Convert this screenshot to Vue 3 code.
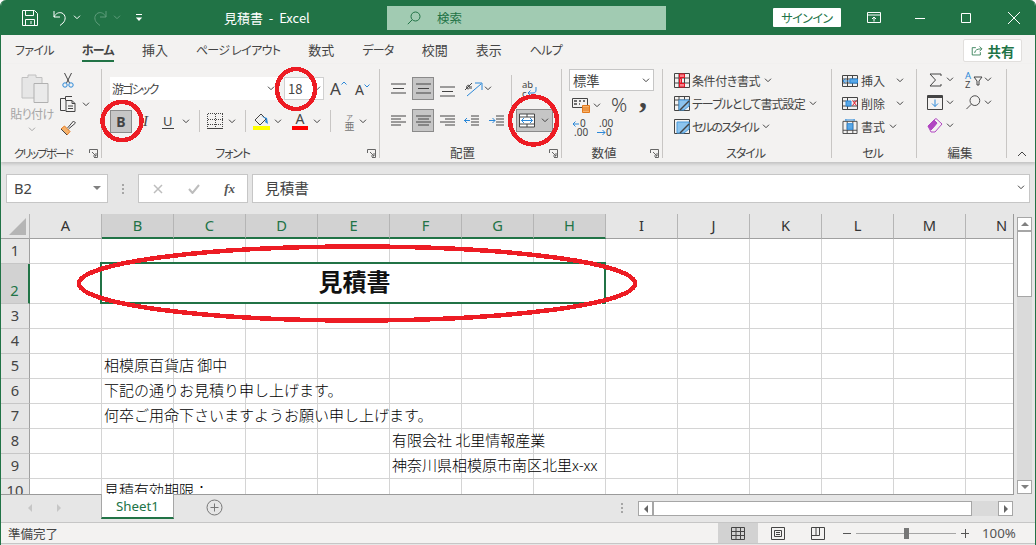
<template>
  <div class="window">
    <svg class="sprite" aria-hidden="true">
      <symbol id="chev" viewBox="0 0 8 5"><path d="M1 .7l3 3 3-3" /></symbol>
      <symbol id="launch" viewBox="0 0 9 9"><path d="M.5 4V.5h8v8H5M3 3l4 4M7 4v3H4" /></symbol>
    </svg>

    <header class="titlebar">
      <svg class="qat save" viewBox="0 0 16 16"><path d="M.5.500h12l3 3v12H.5zM3.500.5v5h8v-5M3.500 15.500v-6h9v6M9 11v3" /></svg>
      <svg class="qat undo" viewBox="0 0 16 16"><path d="M2 1v6h6M2 7c2-4 5-5 8-4 4 2 4 7 1 10l-3 2.500" /></svg>
      <svg class="tchev c-undo"><use href="#chev" /></svg>
      <svg class="qat redo dim" viewBox="0 0 16 16"><path d="M14 1v6H8M14 7c-2-4-5-5-8-4-4 2-4 7-1 10l3 2.500" /></svg>
      <svg class="tchev c-redo dim"><use href="#chev" /></svg>
      <svg class="customize" viewBox="0 0 8 8"><path d="M1 .5h6" /><path class="solid" d="M.8 3.500h6.400L4 7z" /></svg>
      <div class="doc-title">見積書&nbsp; - &nbsp;Excel</div>
      <div class="search">
        <svg viewBox="0 0 14 14"><circle cx="8.500" cy="5.500" r="4.500" /><path d="M5.200 8.800L.8 13.200" /></svg>
        <span>検索</span>
      </div>
      <button class="signin">サインイン</button>
      <svg class="display" viewBox="0 0 14 11"><path d="M.5.500h13v10H.5zM.5 3h13M7 9.500V5M5 7l2-2 2 2" /></svg>
      <svg class="win min" viewBox="0 0 10 10"><path d="M0 5.500h10" /></svg>
      <svg class="win max" viewBox="0 0 10 10"><path d="M.5.500h9v9h-9z" /></svg>
      <svg class="win close" viewBox="0 0 14 14"><path d="M1 1l12 12M13 1L1 13" /></svg>
    </header>

    <nav class="tabs">
      <span v-for="t in tabs" :key="t.name" class="tab" :class="{ active: t.active, kana: t.kana }">{{ t.name }}</span>
      <button class="share">
        <svg viewBox="0 0 16 16"><path d="M6 4.500H1.500v9h10V10M4.500 11C5 7 8 6 13 6M10.500 3l3 3-3 3" /></svg>
        共有
      </button>
    </nav>

    <section class="ribbon">
      <!-- クリップボード -->
      <div class="group g-clip">
        <div class="body clip-body">
          <div class="paste">
            <svg viewBox="0 0 28 30"><path class="g1" d="M1 4.500h6V2h8v2.500h6V25H1z" /><path class="g2" d="M13 10.500h14v19H13z" /></svg>
            <span>貼り付け</span>
            <svg class="chev light"><use href="#chev" /></svg>
          </div>
          <div class="clip-tools">
            <svg class="ico cut" viewBox="0 0 12 16"><path d="M2.500 1l5 10M9.500 1l-5 10" /><circle class="bl" cx="3" cy="13" r="2.200" /><circle class="bl" cx="9" cy="13" r="2.200" /></svg>
            <div class="copy-row">
              <svg class="ico copy" viewBox="0 0 17 16"><path d="M5.500 2.500h-5v12h5M5.500 4.500V.5M5.500.5H12M6 4.500h6l3 3v8H6zM12 4.500v3h3M8 10h5M8 12.500h5" /></svg>
              <svg class="chev"><use href="#chev" /></svg>
            </div>
            <svg class="ico brush" viewBox="0 0 16 16"><path class="or" d="M1 9l6 6 3-3.500-5.500-5.500z" /><path d="M1 9l6 6M7.500 8l6-7 2 2-7 6" /></svg>
          </div>
        </div>
        <div class="label"><span class="kana-tight">クリップボード</span><svg class="launch"><use href="#launch" /></svg></div>
      </div>

      <!-- フォント -->
      <div class="group g-font">
        <div class="body font-body">
          <div class="font-row1">
            <div class="select font-name"><span>游ゴシック</span><svg class="chev"><use href="#chev" /></svg></div>
            <div class="select font-size"><span>18</span><svg class="chev"><use href="#chev" /></svg></div>
            <span class="grow">A<svg viewBox="0 0 6 4"><path d="M.5 3.500L3 1l2.500 2.500" /></svg></span>
            <span class="shrink">A<svg viewBox="0 0 6 4"><path d="M.5.500L3 3 5.500.500" /></svg></span>
          </div>
          <div class="font-row2">
            <button class="toggle bold">B</button>
            <span class="italic">I</span>
            <span class="under">U</span>
            <svg class="chev"><use href="#chev" /></svg>
            <i class="vsep"></i>
            <svg class="ico borders" viewBox="0 0 16 16"><path class="dots" d="M.5.500h15M.5 6.500h15M.5 11.500h15M.5.500v13M8 .5v13M15.500.5v13" /><path d="M0 15h16" /></svg>
            <svg class="chev"><use href="#chev" /></svg>
            <i class="vsep"></i>
            <svg class="ico fill-color" viewBox="0 0 17 18"><path d="M2 8l6-6 5 5-6 6z" /><path class="bl-fill" d="M8 4l5 3-1 3 3 2-1-6z" /><path class="yellow" d="M0 14h17v4H0z" /></svg>
            <svg class="chev"><use href="#chev" /></svg>
            <span class="font-color">A</span>
            <svg class="chev"><use href="#chev" /></svg>
            <i class="vsep"></i>
            <span class="phonetic"><small>ア</small>亜</span>
            <svg class="chev"><use href="#chev" /></svg>
          </div>
        </div>
        <div class="label"><span class="kana">フォント</span><svg class="launch"><use href="#launch" /></svg></div>
      </div>

      <!-- 配置 -->
      <div class="group g-align">
        <div class="body align-body">
          <div class="align-left">
            <div class="align-row1">
              <svg class="ico lines" viewBox="0 0 15 12"><path d="M0 1h15M2 5.500h11M0 10h15" /></svg>
              <button class="toggle"><svg class="ico lines" viewBox="0 0 15 12"><path d="M0 1h15M2 5.500h11M0 10h15" /></svg></button>
              <svg class="ico lines low" viewBox="0 0 15 12"><path d="M0 1h15M2 5.500h11M0 10h15" /></svg>
              <svg class="ico orient" viewBox="0 0 19 17"><path class="dk" d="M1 10l7-7M3 6c-1 1 0 3 1 3s2-1 1-3-1-1-2 0zM7 9V6" /><path class="bl" d="M3 16L17 4M11 3h7v7" /></svg>
              <svg class="chev"><use href="#chev" /></svg>
            </div>
            <div class="align-row2">
              <svg class="ico lines" viewBox="0 0 15 12"><path d="M0 1h15M0 4h10M0 7h15M0 10h10" /></svg>
              <button class="toggle"><svg class="ico lines" viewBox="0 0 15 12"><path d="M0 1h15M2 4h11M0 7h15M2 10h11" /></svg></button>
              <svg class="ico lines" viewBox="0 0 15 12"><path d="M0 1h15M5 4h10M0 7h15M5 10h10" /></svg>
              <svg class="ico lines" viewBox="0 0 15 12"><path d="M7 1h8M7 4h8M7 7h8M7 10h8" /><path class="bl" d="M0 5.500h6M3 3L.5 5.500 3 8" /></svg>
              <svg class="ico lines" viewBox="0 0 15 12"><path d="M7 1h8M7 4h8M7 7h8M7 10h8" /><path class="bl" d="M0 5.500h6M3.500 3L6 5.500 3.500 8" /></svg>
            </div>
          </div>
          <div class="align-right">
            <svg class="wrap" viewBox="0 0 17 18">
              <text x="1" y="8">ab</text><text x="1" y="17">c</text>
              <path class="bl" d="M15 7v3c0 2-1 3-3 3H7M9.500 10.500L7 13l2.500 2.500" />
            </svg>
            <button class="toggle merge">
              <svg class="ico" viewBox="0 0 16 14"><path class="white-box" d="M.5.500h15v13H.5z" /><path d="M.5 3.500h15M.5 10.500h15M8 .5v3M8 10.500v3" /><path class="bl" d="M2.500 7h11M5 4.500L2.500 7 5 9.500M11 4.500L13.500 7 11 9.500" /></svg>
              <svg class="chev"><use href="#chev" /></svg>
            </button>
          </div>
        </div>
        <div class="label"><span>配置</span><svg class="launch"><use href="#launch" /></svg></div>
      </div>

      <!-- 数値 -->
      <div class="group g-num">
        <div class="body num-body">
          <div class="select num-select"><span>標準</span><svg class="chev"><use href="#chev" /></svg></div>
          <div class="num-row2">
            <svg class="ico acct" viewBox="0 0 18 16"><path d="M.5 1.500h15v9H.5z" /><path class="thick" d="M2 4h3M2 7h3M7 4h2M7 7h1M11 4h2" /><path class="or" d="M10.500 8.500h7v7h-7z" /><path class="or-line" d="M10.500 11h7M10.500 13h7" /></svg>
            <svg class="chev"><use href="#chev" /></svg>
            <span class="percent">%</span>
            <span class="comma">,</span>
          </div>
          <div class="num-row3">
            <svg class="dec" viewBox="0 0 17 18"><text x="8" y="8">0</text><text x="2" y="17">.00</text><path class="bl" d="M1 5h6M3.500 2.500L1 5l2.500 2.500" /></svg>
            <svg class="dec" viewBox="0 0 17 18"><text x="3" y="8">.00</text><text x="10" y="17">0</text><path class="bl" d="M1 13.500h8M6.500 11L9 13.500 6.500 16" /></svg>
          </div>
        </div>
        <div class="label"><span>数値</span><svg class="launch"><use href="#launch" /></svg></div>
      </div>

      <!-- スタイル -->
      <div class="group g-style">
        <div class="body style-body">
          <div class="line-btn">
            <svg class="ico" viewBox="0 0 16 15"><path d="M.5.500h15v14H.5zM.5 5h15M.5 10h15M5 .5v14M10.500.5v14" /><path class="rd" d="M5.500 1h5v3.500h-5zM5.500 10.500h5V14h-5zM5.500 5.500h2V10h-2z" /></svg>
            <span class="t-cond">条件付き書式</span><svg class="chev"><use href="#chev" /></svg>
          </div>
          <div class="line-btn">
            <svg class="ico" viewBox="0 0 16 15"><path d="M.5.500h15v14H.5zM.5 4h15M.5 9h5M5 .5v14M10.500.5V4" /><path class="bl-pale" d="M5 4h10v6l-5 4H5z" /><path class="brush-line" d="M6 14l9-9" /></svg>
            <span class="t-table">テーブルとして書式設定</span><svg class="chev"><use href="#chev" /></svg>
          </div>
          <div class="line-btn">
            <svg class="ico" viewBox="0 0 16 15"><path d="M.5.500h15v14H.5z" /><path class="bl-pale" d="M3 3h12v7l-5 4H3z" /><path class="brush-line" d="M6 14l9-9" /></svg>
            <span class="t-cell">セルのスタイル</span><svg class="chev"><use href="#chev" /></svg>
          </div>
        </div>
        <div class="label plain"><span class="kana">スタイル</span></div>
      </div>

      <!-- セル -->
      <div class="group g-cell">
        <div class="body cell-body">
          <div class="line-btn">
            <svg class="ico" viewBox="0 0 16 15"><path d="M.5 2.500h15v11H.5zM.5 6h15M.5 10h15M5.500 2.500v11M10.500 2.500v11" /><path class="bl-soft" d="M8 6h7.500v4H8z" /><path class="bl" d="M1 8h7M3.500 5.500L1 8l2.500 2.500" /></svg>
            <span>挿入</span><svg class="chev"><use href="#chev" /></svg>
          </div>
          <div class="line-btn">
            <svg class="ico" viewBox="0 0 16 15"><path d="M.5 1.500h15v12H.5zM.5 5h4M11.500 5h4M.5 10h15M5.500 1.500v12" /><path class="bl-soft" d="M4 5h5v5H4z" /><path class="rd-line" d="M10.500 4.500l4 5M14.500 4.500l-4 5" /></svg>
            <span>削除</span><svg class="chev"><use href="#chev" /></svg>
          </div>
          <div class="line-btn narrow">
            <svg class="ico" viewBox="0 0 16 16"><path d="M.5 2.500h15v13H.5zM.5 12h15M5 2.500v13M11 2.500v13" /><path class="bl-soft" d="M5 5h6v6H5z" /><path class="bl" d="M3.500 1h9M3.500 0v2M12.500 0v2" /></svg>
            <span>書式</span><svg class="chev"><use href="#chev" /></svg>
          </div>
        </div>
        <div class="label plain"><span class="kana">セル</span></div>
      </div>

      <!-- 編集 -->
      <div class="group g-edit">
        <div class="body edit-body">
          <div class="edit-row first">
            <svg class="ico sigma" viewBox="0 0 13 14"><path d="M12 3V1H1l5.500 6L1 13h11v-2" /></svg>
            <svg class="chev"><use href="#chev" /></svg>
            <svg class="ico sort" viewBox="0 0 19 16"><text class="az-a" x="0" y="7">A</text><text class="az-z" x="0" y="16">Z</text><path d="M9 5h8l-3 4v4h-2V9z" /></svg>
            <svg class="chev"><use href="#chev" /></svg>
          </div>
          <div class="edit-row">
            <svg class="ico" viewBox="0 0 16 15"><path d="M.5.500h15v14H.5z" /><path class="thick-dk" d="M.5 2h15" /><path class="bl" d="M8 4.500v7M5 8.500l3 3 3-3" /></svg>
            <svg class="chev"><use href="#chev" /></svg>
            <svg class="ico" viewBox="0 0 16 16"><circle cx="10" cy="6" r="5.200" /><path d="M6.200 9.800L1 15" /></svg>
            <svg class="chev"><use href="#chev" /></svg>
          </div>
          <div class="edit-row">
            <svg class="ico" viewBox="0 0 16 15"><path class="pu" d="M1 8l6-6 3 3-6 7z" /><path class="pu-line" d="M7 2l2-1.500 6 5.500-7 8H4L1 8zM10 5l-6 7" /></svg>
            <svg class="chev"><use href="#chev" /></svg>
          </div>
        </div>
        <div class="label plain"><span>編集</span></div>
      </div>

      <svg class="collapse" viewBox="0 0 10 6"><path d="M1 5l4-4 4 4" /></svg>
    </section>

    <section class="formula">
      <div class="name-box"><span>B2</span><i class="tri-down"></i></div>
      <div class="grip"><i></i><i></i><i></i></div>
      <div class="fx-box">
        <svg viewBox="0 0 10 10"><path d="M1 1l8 8M9 1L1 9" /></svg>
        <svg viewBox="0 0 12 10"><path d="M1 5l3.500 4L11 1" /></svg>
        <span>fx</span>
      </div>
      <div class="fx-input"><span>見積書</span><svg class="chev"><use href="#chev" /></svg></div>
    </section>

    <section class="sheet-row">
      <div class="sheet">
        <div class="grid">
          <div class="corner"><i></i></div>
          <div v-for="c in cols" :key="c" class="col-head" :class="{ sel: selCols.includes(c) }">{{ c }}</div>
          <template v-for="r in rows" :key="r">
            <div class="row-head" :class="{ sel: r === 2 }">{{ r }}</div>
            <template v-if="r === 2">
              <div class="cell"></div>
              <div class="cell merged">
                見積書
                <i class="selection"><b></b></i>
              </div>
              <div v-for="c in cols.slice(8)" :key="c" class="cell"></div>
            </template>
            <template v-else>
              <div v-for="c in cols" :key="c" class="cell"><span v-if="cells[c + r]">{{ cells[c + r] }}</span></div>
            </template>
          </template>
        </div>
      </div>
      <div class="vscroll">
        <div class="sbtn"><i class="tri-up"></i></div>
        <div class="vthumb"></div>
        <div class="strack"></div>
        <div class="sbtn"><i class="tri-down"></i></div>
      </div>
    </section>

    <section class="sheet-tabs">
      <div class="nav-arrows"><i class="tri-left"></i><i class="tri-right"></i></div>
      <div class="sheet-tab">Sheet1</div>
      <svg class="add" viewBox="0 0 17 17"><circle cx="8.500" cy="8.500" r="7.500" /><path d="M8.500 4.500v8M4.500 8.500h8" /></svg>
      <div class="grip tab-grip"><i></i><i></i><i></i></div>
      <div class="hscroll">
        <div class="hbtn"><i class="tri-left dark"></i></div>
        <div class="hthumb"></div>
        <div class="strack"></div>
        <div class="hbtn"><i class="tri-right dark"></i></div>
      </div>
    </section>

    <footer class="status">
      <span class="ready">準備完了</span>
      <div class="view on"><svg viewBox="0 0 14 13"><path d="M.5.500h13v12H.5zM.5 4.500h13M.5 8.500h13M5 .5v12M9.500.5v12" /></svg></div>
      <div class="view"><svg viewBox="0 0 14 13"><path d="M.5.500h13v12H.5zM3.500 3.500h7v6h-7zM5 5.500h4M5 7.500h4" /></svg></div>
      <div class="view"><svg viewBox="0 0 14 13"><path d="M.5.500h13v12H.5zM.5 8.500h8V.5M5 .5v8" /></svg></div>
      <div class="zoom">
        <i class="zm"></i>
        <div class="slider"><b></b></div>
        <i class="zm plus"></i>
        <span>100%</span>
      </div>
    </footer>

    <svg class="marks" viewBox="0 0 1036 545" shape-rendering="crispEdges">
      <ellipse cx="122" cy="121" rx="19.500" ry="19" />
      <ellipse cx="296" cy="89" rx="19" ry="20" />
      <ellipse cx="533.500" cy="120.500" rx="23.500" ry="24" />
      <ellipse cx="357" cy="283.500" rx="278" ry="37" />
    </svg>
  </div>
</template>

<script setup>
const tabs = [
  { name: 'ファイル', kana: true },
  { name: 'ホーム', active: true, kana: true },
  { name: '挿入' },
  { name: 'ページ レイアウト', kana: true },
  { name: '数式' },
  { name: 'データ', kana: true },
  { name: '校閲' },
  { name: '表示' },
  { name: 'ヘルプ', kana: true }
]

const cols = ['A', 'B', 'C', 'D', 'E', 'F', 'G', 'H', 'I', 'J', 'K', 'L', 'M', 'N']
const selCols = ['B', 'C', 'D', 'E', 'F', 'G', 'H']
const rows = [1, 2, 3, 4, 5, 6, 7, 8, 9, 10]

const cells = {
  B5: '相模原百貨店 御中',
  B6: '下記の通りお見積り申し上げます。',
  B7: '何卒ご用命下さいますようお願い申し上げます。',
  F8: '有限会社 北里情報産業',
  F9: '神奈川県相模原市南区北里x-xx',
  B10: '見積有効期限：'
}
</script>

<style>
html,
body {
  margin: 0;
  background: #fff;
}
</style>

<style scoped>
.window {
  position: relative;
  width: 1036px;
  height: 545px;
  box-sizing: border-box;
  border-left: 1px solid #217346;
  border-right: 1px solid #217346;
  border-radius: 6px 6px 0 0;
  overflow: hidden;
  background: #e6e6e6;
  color: #444;
  font-family: "Noto Sans CJK JP", "Noto Sans", sans-serif;
  font-size: 13px;
  font-feature-settings: "palt";
}

button {
  font-family: inherit;
  padding: 0;
}

svg {
  display: block;
  fill: none;
  stroke: #444;
  stroke-width: 1;
  flex: none;
}

.sprite {
  position: absolute;
  width: 0;
  height: 0;
}

.chev {
  width: 8px;
  height: 5px;
}

.chev.light {
  stroke: #a6a6a6;
}

.ico {
  width: 16px;
  height: 15px;
}

/* title bar */
.titlebar {
  height: 35px;
  margin: 0 -1px;
  background: #217346;
  display: flex;
  align-items: center;
  color: #fff;
}

.titlebar svg {
  stroke: #fff;
}

.titlebar svg.dim {
  stroke: #5f9c7b;
}

.qat {
  width: 16px;
  height: 16px;
}

.save {
  margin-left: 22px;
}

.undo {
  margin-left: 14px;
}

.tchev {
  width: 8px;
  height: 5px;
  margin-left: 5px;
}

.redo {
  margin-left: 11px;
}

.customize {
  width: 8px;
  height: 8px;
  margin-left: 14px;
}

.customize .solid {
  fill: #fff;
  stroke: none;
}

.doc-title {
  margin-left: 81px;
  width: 87px;
  font-size: 13px;
  white-space: nowrap;
}

.search {
  margin-left: 76px;
  width: 279px;
  height: 24px;
  background: #a1cbb2;
  display: flex;
  align-items: center;
  color: #217346;
}

.titlebar .search svg {
  width: 14px;
  height: 14px;
  margin-left: 20px;
  stroke: #217346;
}

.search span {
  margin-left: 16px;
  font-size: 12.500px;
}

.signin {
  margin-left: 107px;
  width: 68px;
  height: 19px;
  background: #fff;
  border: 0;
  border-radius: 1px;
  color: #217346;
  font-size: 12px;
  letter-spacing: -.5px;
  font-feature-settings: "palt";
}

.display {
  width: 14px;
  height: 11px;
  margin-left: 26px;
}

.win {
  width: 10px;
  height: 10px;
}

.min {
  margin-left: 34px;
}

.max {
  margin-left: 36px;
}

.close {
  width: 14px;
  height: 14px;
  margin-left: 36px;
}

/* tabs */
.tabs {
  height: 29px;
  background: #f3f2f1;
  display: flex;
  align-items: flex-start;
  position: relative;
}

.tab {
  position: relative;
  height: 25px;
  line-height: 30px;
  margin-left: 28px;
  white-space: nowrap;
  font-size: 13px;
}

.tab.kana {
  font-size: 12px;
  letter-spacing: -.7px;
}

.tab:first-child {
  margin-left: 14px;
}

.tab.active {
  font-weight: 700;
  border-bottom: 2px solid #217346;
}

.share {
  margin: 4px 13px 0 auto;
  width: 59px;
  height: 23px;
  background: #fff;
  border: 1px solid #e1dfdd;
  border-radius: 2px;
  color: #217346;
  font-size: 13.500px;
  font-weight: 700;
  display: flex;
  align-items: center;
  justify-content: center;
  gap: 4px;
}

.share svg {
  width: 13px;
  height: 13px;
  stroke: #217346;
}

/* ribbon */
.ribbon {
  position: relative;
  z-index: 2;
  height: 98px;
  box-sizing: border-box;
  padding-top: 5px;
  background: #f3f2f1;
  box-shadow: 0 2px 3px rgba(0, 0, 0, .16);
  display: flex;
  align-items: flex-start;
}

.group {
  height: 89px;
  box-sizing: border-box;
  border-right: 1px solid #c8c6c4;
  display: flex;
  flex-direction: column;
}

.g-clip {
  width: 101px;
}

.g-font {
  width: 278px;
}

.g-align {
  width: 182px;
}

.g-num {
  width: 101px;
}

.g-style {
  width: 169px;
}

.g-cell {
  width: 85px;
}

.g-edit {
  width: 90px;
}

.body {
  flex: 1;
  min-height: 0;
}

.label {
  height: 16px;
  margin-bottom: -3px;
  padding-right: 3px;
  display: flex;
  align-items: center;
  font-size: 12.500px;
  line-height: 16px;
  white-space: nowrap;
}

.label span {
  flex: 1;
  text-align: center;
  padding-right: 4px;
}

.label.plain span {
  padding: 0;
}

.label .kana {
  font-size: 12px;
  letter-spacing: -1.100px;
}

.label .kana-tight {
  font-size: 11.500px;
  letter-spacing: -1.800px;
}

.launch {
  width: 9px;
  height: 9px;
  stroke: #666;
}

.toggle {
  background: #c6c6c6;
  border: 1px solid #8a8a8a;
  box-sizing: border-box;
  display: flex;
  align-items: center;
  justify-content: center;
}

.vsep {
  display: block;
  width: 1px;
  height: 22px;
  background: #c8c6c4;
}

.select {
  background: #fff;
  box-sizing: border-box;
  display: flex;
  align-items: center;
}

/* clipboard */
.clip-body {
  display: flex;
}

.paste {
  width: 56px;
  display: flex;
  flex-direction: column;
  align-items: center;
  padding-top: 4px;
  margin-left: 3px;
  color: #a6a6a6;
  font-size: 12px;
  letter-spacing: -.5px;
}

.paste svg:first-child {
  width: 28px;
  height: 30px;
  margin-left: 5px;
}

.paste span {
  line-height: 20px;
  margin-top: 1px;
  white-space: nowrap;
}

.paste .chev {
  margin-top: 3px;
}

.g1 {
  fill: #e6e6e6;
  stroke: #c0c0c0;
}

.g2 {
  fill: #eaeaea;
  stroke: #b0b0b0;
}

.clip-tools {
  margin-top: 3px;
  display: flex;
  flex-direction: column;
  gap: 8px;
}

.cut {
  width: 12px;
  height: 16px;
  margin-left: 2px;
}

.bl {
  stroke: #2b88d8;
}

.copy-row {
  display: flex;
  align-items: center;
  gap: 5px;
}

.copy {
  width: 17px;
  height: 16px;
}

.brush {
  height: 16px;
}

.or {
  fill: #f6b26b;
  stroke: #e3791c;
}

/* font */
.font-body {
  padding: 8px 0 0 8px;
}

.font-row1 {
  display: flex;
  align-items: center;
  height: 23px;
}

.font-name {
  width: 168px;
  height: 23px;
  padding: 0 2px;
  font-size: 12px;
  letter-spacing: -1.800px;
  justify-content: space-between;
}

.font-name .chev {
  margin-right: 1px;
}

.font-size {
  width: 40px;
  height: 23px;
  margin-left: 6px;
  border: 1px solid #d0d0d0;
  padding-left: 3px;
  justify-content: space-between;
  padding-right: 2px;
  font-size: 13px;
}

.grow,
.shrink {
  position: relative;
  color: #444;
  display: flex;
  font-family: "Noto Sans", sans-serif;
}

.grow {
  margin-left: 6px;
  width: 25px;
  font-size: 17px;
}

.shrink {
  width: 18px;
  font-size: 14px;
  padding-top: 2px;
}

.grow svg,
.shrink svg {
  width: 6px;
  height: 4px;
  margin-top: 4px;
  stroke: #2b88d8;
}

.font-row2 {
  margin-top: 9px;
  height: 24px;
  display: grid;
  grid-template-columns: 27px 25px 20px 17px 8px 21px 17px 8px 21px 18px 21px 17px 13px 16px auto;
  align-items: center;
  justify-items: start;
}

.bold {
  width: 22px;
  height: 23px;
  font-family: "Noto Sans", sans-serif;
  font-weight: 700;
  font-size: 14px;
  color: #444;
}

.italic {
  font-family: "Liberation Serif", serif;
  font-style: italic;
  font-size: 15px;
  padding-left: 6px;
}

.under {
  font-family: "Noto Sans", sans-serif;
  font-size: 13px;
  border-bottom: 1px solid #444;
  line-height: 14px;
  padding: 0 1px;
}

.borders {
  width: 16px;
  height: 16px;
  shape-rendering: crispEdges;
}

.dots {
  stroke-dasharray: 1 1;
}

.fill-color {
  width: 17px;
  height: 18px;
}

.bl-fill {
  fill: #2b88d8;
  stroke: none;
}

.yellow {
  fill: #ffff00;
  stroke: none;
}

.font-color {
  width: 16px;
  text-align: center;
  font-family: "Noto Sans", sans-serif;
  font-size: 14px;
  line-height: 14px;
  border-bottom: 4px solid #ff0000;
}

.phonetic {
  display: flex;
  flex-direction: column;
  align-items: center;
  width: 13px;
  font-size: 10px;
  line-height: 9px;
  color: #777;
}

.phonetic small {
  font-size: 7px;
  line-height: 8px;
}

/* alignment */
.align-body {
  padding-left: 11px;
  display: flex;
}

.align-left {
  width: 120px;
  height: 58px;
  margin-top: 6px;
  padding-top: 2px;
  border-right: 1px solid #c8c6c4;
}

.lines {
  width: 15px;
  height: 12px;
}

.low {
  margin-top: 6px;
}

.align-row1,
.align-row2 {
  display: grid;
  align-items: center;
  justify-items: start;
  height: 23px;
}

.align-row1 {
  grid-template-columns: 21px 28px 24px 20px auto;
}

.align-row2 {
  grid-template-columns: 21px 28px 24px 25px auto;
  margin-top: 9px;
}

.align-left .toggle {
  width: 22px;
  height: 23px;
}

.orient {
  width: 19px;
  height: 17px;
}

.dk {
  stroke: #444;
}

.align-right {
  margin-left: 4px;
  padding-top: 11px;
}

.wrap {
  width: 17px;
  height: 18px;
  margin-left: 5px;
  overflow: visible;
}

.wrap text,
.dec text,
.sort text {
  stroke: none;
  fill: #444;
  font-family: "Noto Sans", sans-serif;
  font-size: 9.500px;
}

.merge {
  width: 37px;
  height: 23px;
  margin-top: 11px;
  gap: 6px;
  justify-content: flex-start;
  padding-left: 2px;
}

.white-box {
  fill: #fff;
}

/* number */
.num-body {
  padding-left: 7px;
}

.num-select {
  width: 85px;
  height: 22px;
  border: 1px solid #c6c6c6;
  padding: 0 3px;
  justify-content: space-between;
  font-size: 13.300px;
}

.num-row2 {
  margin-top: 6px;
  height: 16px;
  padding-left: 3px;
  display: grid;
  grid-template-columns: 21px 18px 28px auto;
  align-items: center;
  justify-items: start;
}

.acct {
  width: 18px;
  height: 16px;
}

.thick {
  stroke-width: 1.500;
}

.or-line {
  stroke: #e3791c;
}

.percent {
  font-family: "Noto Sans", sans-serif;
  font-size: 20px;
  font-weight: 300;
  line-height: 16px;
  color: #444;
}

.comma {
  font-family: "Liberation Serif", serif;
  font-weight: 700;
  font-size: 32px;
  line-height: 16px;
  margin-top: -16px;
}

.num-row3 {
  margin-top: 6px;
  padding-left: 3px;
  display: flex;
  gap: 7px;
}

.dec {
  width: 17px;
  height: 18px;
  overflow: visible;
}

.dec text {
  font-size: 10px;
}

/* styles + cells */
.style-body {
  padding-left: 11px;
}

.line-btn {
  height: 23px;
  display: flex;
  align-items: center;
  white-space: nowrap;
  font-size: 12px;
}

.line-btn .ico {
  margin-right: 2px;
}

.line-btn .chev {
  margin-left: 4px;
}

.t-cond {
  letter-spacing: -.4px;
}

.t-table {
  letter-spacing: -.95px;
}

.t-cell {
  letter-spacing: -1.600px;
}

.rd {
  fill: #f4828a;
  stroke: #e81123;
}

.rd-line {
  stroke: #e81123;
}

.bl-soft {
  fill: #5ba8e6;
  stroke: #2b88d8;
}

.bl-pale {
  fill: #8cc4ee;
  stroke: #4a9bdc;
}

.brush-line {
  stroke: #444;
  stroke-width: 1.500;
}

.cell-body {
  padding-left: 10px;
}

.cell-body .line-btn {
  width: 70px;
}

.cell-body .line-btn span {
  margin-left: 1px;
  width: 28px;
}

.cell-body .line-btn .chev {
  margin-left: 7px;
}

.cell-body .line-btn.narrow .chev {
  margin-left: 0;
}

/* editing */
.edit-body {
  padding-left: 10px;
  margin-top: -1px;
}

.edit-row {
  height: 23px;
  display: grid;
  grid-template-columns: 19px 19px 19px auto;
  align-items: center;
  justify-items: start;
}

.edit-row.first {
  padding-left: 2px;
  grid-template-columns: 17px 19px 19px auto;
}

.sigma {
  width: 13px;
  height: 14px;
}

.sort {
  width: 19px;
  height: 16px;
  overflow: visible;
}

.sort .az-a {
  fill: #2b88d8;
}

.pu {
  fill: #b146c2;
  stroke: #b146c2;
}

.pu-line {
  stroke: #b146c2;
}

.thick-dk {
  stroke-width: 2;
}

.collapse {
  width: 10px;
  height: 6px;
  margin: 82px 0 0 10px;
}

/* formula bar */
.formula {
  height: 52px;
  box-sizing: border-box;
  padding: 12px 5px 11px 5px;
  display: flex;
  background: #e6e6e6;
}

.name-box,
.fx-box,
.fx-input {
  height: 29px;
  box-sizing: border-box;
  background: #fff;
  border: 1px solid #c6c6c6;
  display: flex;
  align-items: center;
  font-size: 14.670px;
  font-feature-settings: normal;
}

.name-box {
  width: 102px;
  padding: 0 6px 2px 7px;
  justify-content: space-between;
  font-family: "Noto Sans", sans-serif;
}

.tri-down,
.tri-up,
.tri-left,
.tri-right {
  display: block;
  width: 0;
  height: 0;
  border: 4px solid transparent;
}

.tri-down {
  border-top: 4px solid #808080;
  border-bottom: 0;
}

.tri-up {
  border-bottom: 4px solid #808080;
  border-top: 0;
}

.tri-left {
  border-right: 4px solid #c6c6c6;
  border-left: 0;
}

.tri-right {
  border-left: 4px solid #c6c6c6;
  border-right: 0;
}

.tri-left.dark {
  border-right-color: #666;
}

.tri-right.dark {
  border-left-color: #666;
}

.grip {
  width: 30px;
  display: flex;
  flex-direction: column;
  align-items: center;
  justify-content: center;
  gap: 2px;
}

.grip i {
  display: block;
  width: 2px;
  height: 2px;
  background: #a6a6a6;
}

.fx-box {
  width: 110px;
  padding: 0 12px 0 14px;
  justify-content: space-between;
}

.fx-box svg:first-of-type {
  width: 10px;
  height: 10px;
  stroke: #bdbdbd;
  stroke-width: 1.500;
}

.fx-box svg:nth-of-type(2) {
  width: 12px;
  height: 10px;
  stroke: #bdbdbd;
  stroke-width: 2;
}

.fx-box span {
  font-family: "Liberation Serif", serif;
  font-style: italic;
  font-weight: 700;
  font-size: 13px;
  color: #555;
}

.fx-input {
  margin-left: 4px;
  width: 778px;
  padding: 0 4px 2px 12px;
  justify-content: space-between;
}

/* sheet */
.sheet-row {
  display: flex;
  height: 281px;
  background: #e6e6e6;
}

.sheet {
  width: 1013px;
  height: 281px;
  box-sizing: border-box;
  border-right: 1px solid #9a9a9a;
  border-bottom: 1px solid #9a9a9a;
  overflow: hidden;
  background: #fff;
}

.grid {
  display: grid;
  grid-template-columns: 29px repeat(14, 72px);
  grid-template-rows: 25px 25px 40px repeat(8, 25px);
  color: #000;
  font-size: 15px;
  font-feature-settings: normal;
}

.corner {
  background: #e6e6e6;
  border-bottom: 1px solid #a0a0a0;
  border-right: 1px solid #b5b5b5;
  box-sizing: border-box;
  padding: 4px 3px 0 8px;
}

.corner i {
  display: block;
  width: 0;
  height: 0;
  border-style: solid;
  border-width: 0 0 17px 17px;
  border-color: transparent transparent #b5b5b5 transparent;
}

.col-head {
  box-sizing: border-box;
  background: #e6e6e6;
  border-right: 1px solid #b5b5b5;
  border-bottom: 1px solid #a0a0a0;
  padding-bottom: 2px;
  display: flex;
  align-items: center;
  justify-content: center;
  font-family: "Noto Sans", sans-serif;
  font-size: 14.670px;
  color: #333;
}

.col-head.sel {
  background: #d2d2d2;
  color: #217346;
  border-bottom: 2px solid #217346;
  padding-bottom: 1px;
}

.row-head {
  box-sizing: border-box;
  background: #e6e6e6;
  border-right: 1px solid #a0a0a0;
  border-bottom: 1px solid #c6c6c6;
  padding-bottom: 2px;
  display: flex;
  align-items: center;
  justify-content: center;
  font-family: "Noto Sans", sans-serif;
  font-size: 14.670px;
  color: #444;
}

.row-head.sel {
  background: #d2d2d2;
  color: #217346;
  align-items: flex-end;
  border-right: 2px solid #217346;
  padding-bottom: 3px;
}

.cell {
  box-sizing: border-box;
  border-right: 1px solid #d4d4d4;
  border-bottom: 1px solid #d4d4d4;
  padding: 0 0 3px 2px;
  display: flex;
  align-items: center;
  white-space: nowrap;
  min-width: 0;
}

.cell span {
  position: relative;
  z-index: 1;
  font-weight: 300;
}

.merged {
  grid-column: span 7;
  position: relative;
  justify-content: center;
  padding-bottom: 6px;
  font-size: 24px;
  font-weight: 700;
  color: #111;
}

.selection {
  position: absolute;
  inset: -2px -1px -1px -2px;
  border: 2px solid #217346;
}

.selection b {
  position: absolute;
  right: -3px;
  bottom: -3px;
  width: 4px;
  height: 4px;
  background: #217346;
  border: 1px solid #fff;
}

.vscroll {
  margin: 3px 0 0 3px;
  width: 15px;
  height: 277px;
  display: flex;
  flex-direction: column;
  background: #dadada;
}

.sbtn {
  box-sizing: border-box;
  height: 14px;
  background: #fff;
  border: 1px solid #a6a6a6;
  display: flex;
  align-items: center;
  justify-content: center;
}

.vthumb {
  height: 66px;
  box-sizing: border-box;
  background: #fff;
  border: 1px solid #a6a6a6;
}

.strack {
  flex: 1;
  background: #dadada;
}

/* sheet tabs */
.sheet-tabs {
  position: relative;
  z-index: 1;
  height: 27px;
  display: flex;
  align-items: flex-start;
  background: #e6e6e6;
  border-bottom: 1px solid #c6c6c6;
  box-sizing: content-box;
}

.nav-arrows {
  width: 100px;
  padding: 9px 0 0 27px;
  box-sizing: border-box;
  display: flex;
  gap: 25px;
}

.sheet-tab {
  margin-top: -1px;
  width: 73px;
  height: 25px;
  box-sizing: border-box;
  background: #fff;
  border: 1px solid #a6a6a6;
  border-top: 0;
  border-bottom: 2px solid #217346;
  text-align: center;
  color: #217346;
  font-family: "Noto Sans", sans-serif;
  font-size: 13.300px;
  line-height: 24px;
}

.add {
  width: 17px;
  height: 17px;
  margin: 4px 0 0 32px;
  stroke: #777;
}

.tab-grip {
  margin: 6px 0 0 388px;
  width: 22px;
  height: 14px;
}

.hscroll {
  margin: 6px 0 0 5px;
  width: 375px;
  height: 15px;
  display: flex;
  background: #dadada;
}

.hbtn {
  width: 15px;
  box-sizing: border-box;
  background: #fff;
  border: 1px solid #a6a6a6;
  display: flex;
  align-items: center;
  justify-content: center;
}

.hthumb {
  width: 319px;
  box-sizing: border-box;
  background: #fff;
  border: 1px solid #a6a6a6;
}

/* status bar */
.status {
  height: 20px;
  background: #f3f2f1;
  border-bottom: 1px solid #c6c6c6;
  display: flex;
  align-items: center;
}

.ready {
  margin-left: 7px;
  width: 710px;
  font-size: 12.500px;
  font-feature-settings: normal;
}

.view {
  width: 40px;
  height: 20px;
  display: flex;
  align-items: center;
  justify-content: center;
}

.view.on {
  background: #d2d2d2;
}

.view svg {
  width: 14px;
  height: 13px;
}

.zoom {
  margin-left: 5px;
  display: flex;
  align-items: center;
}

.zm {
  position: relative;
  display: block;
  width: 8px;
  height: 1px;
  background: #555;
}

.zm.plus::after {
  content: "";
  position: absolute;
  left: 3.500px;
  top: -4px;
  width: 1px;
  height: 9px;
  background: #555;
}

.slider {
  position: relative;
  margin: 0 5px;
  width: 100px;
  height: 1px;
  background: #a6a6a6;
}

.slider b {
  position: absolute;
  left: 48px;
  top: -5px;
  width: 5px;
  height: 11px;
  background: #777;
}

.zoom span {
  margin-left: 13px;
  color: #555;
  font-family: "Noto Sans", sans-serif;
  font-size: 13.300px;
}

/* red hand-drawn marks over the window */
.marks {
  position: absolute;
  left: -1px;
  top: 0;
  z-index: 5;
  width: 1036px;
  height: 545px;
  stroke: #ed1c24;
  stroke-width: 4.500;
  pointer-events: none;
}
</style>
